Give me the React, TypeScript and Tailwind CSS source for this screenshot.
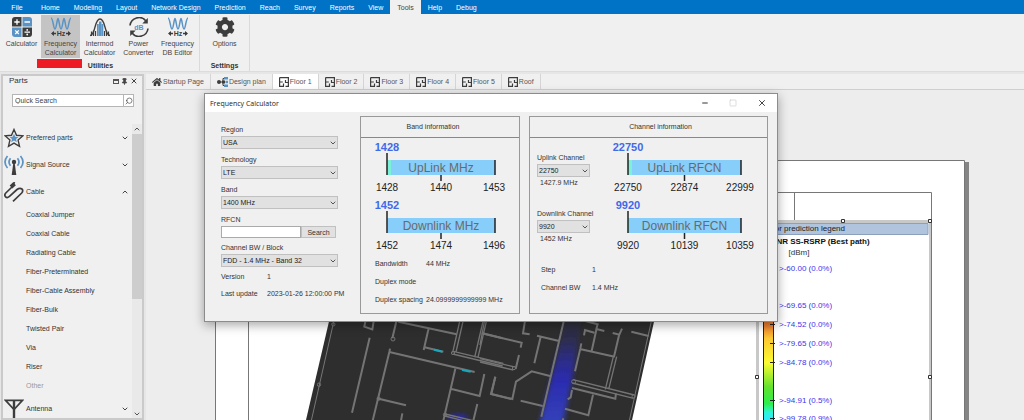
import type { ReactNode } from "react";
import { ChevronDown, ChevronUp, Minus, Pin, Search, Square, X } from "lucide-react";
import { FaCog, FaHome } from "react-icons/fa";
import { clsx } from "clsx";

const menuItems = [
  "Home", "Modeling", "Layout", "Network Design", "Prediction", "Reach",
  "Survey", "Reports", "View", "Tools", "Help", "Debug",
];

const cableItems = [
  "Coaxial Jumper", "Coaxial Cable", "Radiating Cable", "Fiber-Preterminated",
  "Fiber-Cable Assembly", "Fiber-Bulk", "Twisted Pair", "Via", "Riser", "Other",
];

const legendRows = [
  { y: 268, text: ">-60.00 (0.0%)" },
  { y: 305, text: ">-69.65 (0.0%)" },
  { y: 324, text: ">-74.52 (0.0%)" },
  { y: 343, text: ">-79.65 (0.0%)" },
  { y: 362, text: ">-84.78 (0.0%)" },
  { y: 400, text: ">-94.91 (0.5%)" },
  { y: 418, text: ">-99.78 (0.9%)" },
];

/* ---------- icons ---------- */

function CalculatorIcon() {
  return (
    <svg viewBox="0 0 20 20" className="h-5 w-5">
      <path d="M3 0h6.500v9.500H0V3a3 3 0 0 1 3-3z" fill="#3d3d3d" />
      <path d="M10.500 0H17a3 3 0 0 1 3 3v6.500h-9.500z" fill="#5b93c4" />
      <path d="M0 10.500h9.500V20H3a3 3 0 0 1-3-3z" fill="#5b93c4" />
      <path d="M10.500 10.500H20V17a3 3 0 0 1-3 3h-6.500z" fill="#3d3d3d" />
      <g stroke="#fff" strokeWidth="1.300">
        <path d="M2.300 5h5.400M5 2.300v5.400M12.500 5h5.500M3.200 13.400l3.600 3.600M6.800 13.400l-3.600 3.600M12.500 15.200H18" />
      </g>
      <circle cx="15.200" cy="12.900" r="0.900" fill="#fff" />
      <circle cx="15.200" cy="17.500" r="0.900" fill="#fff" />
    </svg>
  );
}

function WaveIcon() {
  return (
    <svg viewBox="0 0 20 20" className="h-5 w-5">
      <path
        d="M0 1C2 1 2.500 12 4 12S6 1.500 7 1.500s1.500 10.500 3 10.500 2-10.500 3-10.500 1.500 10.500 3 10.500S18 1 20 1"
        fill="none" stroke="#5b93c4" strokeWidth="1.500"
      />
      <path d="M1 16.500h4M15 16.500h4" stroke="#3d3d3d" strokeWidth="1.300" />
      <path d="M0 16.500l3-2.500v5zM20 16.500l-3-2.500v5z" fill="#3d3d3d" />
      <text x="10" y="19" textAnchor="middle" fontSize="7" fontWeight="bold" fill="#3d3d3d">Hz</text>
    </svg>
  );
}

function IntermodIcon() {
  return (
    <svg viewBox="0 0 20 20" className="h-5 w-5">
      <path d="M7 7h1.800v12H7zM9 4.500h2.500V19H9zM11.700 7h1.600v12h-1.600z" fill="#5b93c4" />
      <path d="M1.500 19v-4.500M3.500 19v-5.500M5.500 19v-5M14.500 19v-5M16.500 19v-5.500M18.500 19v-4.500" stroke="#3d3d3d" strokeWidth="1.200" />
      <path d="M0 18.500C6 18 4 2 10 2s4 16 10 16.500" fill="none" stroke="#3d3d3d" strokeWidth="1.400" />
    </svg>
  );
}

function PowerIcon() {
  return (
    <svg viewBox="0 0 20 20" className="h-5 w-5">
      <path d="M1 8.500A9 9 0 0 1 17 4M19 11.500A9 9 0 0 1 3 16" fill="none" stroke="#3d3d3d" strokeWidth="1.600" />
      <path d="M18.800 1v5.500h-5.500zM1.200 19v-5.500h5.500z" fill="#3d3d3d" />
      <text x="10" y="12.500" textAnchor="middle" fontSize="7" fontWeight="bold" fill="#5b93c4">dB</text>
    </svg>
  );
}

function StarIcon() {
  return (
    <svg viewBox="0 0 20 20" className="h-5 w-5">
      <path d="M10 1.500l2.500 5.800 6.300.6-4.700 4.200 1.400 6.200L10 15.100l-5.500 3.200 1.400-6.200L1.200 7.900l6.300-.6z" fill="none" stroke="#3d3d3d" strokeWidth="1.400" />
      <path d="M10 5.700l1.300 3 3.200.3-2.400 2.100.7 3.200-2.800-1.700-2.800 1.700.7-3.200L5.500 9l3.200-.3z" fill="#5b93c4" />
    </svg>
  );
}

function SignalIcon() {
  return (
    <svg viewBox="0 0 20 20" className="h-5 w-5">
      <path d="M3.500 1q-5 6 0 12M6.500 3.200q-3 3.800 0 7.600M16.500 1q5 6 0 12M13.500 3.200q3 3.800 0 7.600" fill="none" stroke="#5b93c4" strokeWidth="1.700" />
      <circle cx="10" cy="7" r="2.200" fill="#3d3d3d" />
      <path d="M9.300 8h1.400l1.600 12H7.700z" fill="#3d3d3d" />
    </svg>
  );
}

function CableIcon() {
  return (
    <svg viewBox="0 0 20 20" className="h-5 w-5" fill="none" stroke="#3d3d3d" strokeWidth="1.700">
      <path d="M8 5L1.800 11c-2.500 3 .8 6 3.400 3.500L13 7.500c4-3 7.500.5 4.700 3.500L9 19.300" />
      <path d="M10.500 0L9.500 2" />
      <path d="M10.500 1.800L7 5" strokeWidth="4" />
    </svg>
  );
}

function AntennaIcon() {
  return (
    <svg viewBox="0 0 20 20" className="h-5 w-5" fill="none" stroke="#3d3d3d" strokeWidth="1.800">
      <path d="M1.500 1.300h17L10 10.500z" />
      <path d="M10 1v19" strokeWidth="2.400" />
    </svg>
  );
}

function FloorIcon() {
  return (
    <svg viewBox="0 0 10 10" className="h-2.5 w-2.5" fill="none" stroke="#3d3d3d" strokeWidth="1.200">
      <path d="M.6.6h8.800v8.800H6.500M5 9.400H.6V.6M.6 5h3.200M6.500 3v2.500h3M4.500 6.500v3" />
    </svg>
  );
}

function DesignIcon() {
  return (
    <svg viewBox="0 0 11 10" className="h-2.5 w-[11px]">
      <path d="M3 5h3M6 1.500v7M6 1.500h2M6 8.500h2" stroke="#3d3d3d" fill="none" />
      <circle cx="2" cy="5" r="2" fill="#3d3d3d" />
      <path d="M5 3.500h3v3H5z" fill="#3d3d3d" />
      <path d="M7 0h4v2.500H7zM8.500 3.700H11v2.500H8.500zM7 7.500h4V10H7z" fill="#5b93c4" />
    </svg>
  );
}

/* ---------- ribbon ---------- */

interface RibbonButtonProps {
  icon: ReactNode;
  lines: string[];
  active?: boolean;
}

function RibbonButton({ icon, lines, active }: RibbonButtonProps) {
  return (
    <button className={clsx("flex h-[43px] w-[39px] flex-col items-center pt-0.5 text-[#444]", active && "bg-[#c4c4c4]")}>
      {icon}
      <span className="mt-0.5 leading-[9px]">
        {lines.map((line) => (
          <span key={line} className="block whitespace-nowrap">{line}</span>
        ))}
      </span>
    </button>
  );
}

function Ribbon() {
  return (
    <div className="flex h-[58px] shrink-0 border-b border-[#dcdcdc] bg-[#f0f0f0] pt-px">
      <div className="relative flex w-[200px] flex-col border-r border-[#dadada] pl-0.5">
        <div className="flex">
          <RibbonButton icon={<CalculatorIcon />} lines={["Calculator"]} />
          <RibbonButton icon={<WaveIcon />} lines={["Frequency", "Calculator"]} active />
          <RibbonButton icon={<IntermodIcon />} lines={["Intermod", "Calculator"]} />
          <RibbonButton icon={<PowerIcon />} lines={["Power", "Converter"]} />
          <RibbonButton icon={<WaveIcon />} lines={["Frequency", "DB Editor"]} />
        </div>
        <div className="mt-1 text-center font-bold leading-2 text-[#333]">Utilities</div>
        <div className="absolute left-[37px] top-11 h-[9px] w-[45px] bg-[#ed1c24]" />
      </div>
      <div className="flex w-[50px] flex-col items-center border-r border-[#dadada]">
        <RibbonButton icon={<FaCog className="h-5 w-5 text-[#3d3d3d]" />} lines={["Options"]} />
        <div className="mt-1 font-bold leading-2 text-[#333]">Settings</div>
      </div>
    </div>
  );
}

/* ---------- parts panel ---------- */

interface CategoryProps {
  icon: ReactNode;
  label: string;
  open?: boolean;
}

function Category({ icon, label, open }: CategoryProps) {
  const Chevron = open ? ChevronUp : ChevronDown;
  return (
    <button className="flex h-[27px] w-full shrink-0 items-center gap-0.5 pl-px pr-[3px] text-left">
      {icon}
      <span className="flex-1">{label}</span>
      <Chevron className="h-2 w-2 text-[#444]" strokeWidth={3} />
    </button>
  );
}

function PartsPanel() {
  return (
    <aside className="mt-0.5 flex w-[143px] shrink-0 flex-col border-2 border-[#cacaca] bg-[#f0f0f0] text-[#333]">
      <div className="flex h-2.5 items-center pl-1.5 pr-1">
        <span className="flex-1 text-[8px] leading-2">Parts</span>
        <span className="flex items-center gap-0.5 text-[#444]">
          <button aria-label="Maximize panel" className="h-[5px] w-1.5 border border-t-2 border-[#555]" />
          <button aria-label="Pin panel"><Pin className="h-[7px] w-[7px] fill-current" strokeWidth={3} /></button>
          <button aria-label="Close panel"><X className="h-2 w-2" strokeWidth={3} /></button>
        </span>
      </div>
      <div className="ml-[9px] mr-2 mt-2 flex h-[13px] shrink-0 border border-[#b5b5b5] bg-white">
        <input aria-label="Quick Search" placeholder="Quick Search" className="min-w-0 flex-1 px-0.5 text-[7px] outline-none placeholder:text-[#444]" />
        <button aria-label="Search parts" className="flex w-2.5 items-center justify-center border-l border-[#b5b5b5] text-[#444]">
          <Search className="h-2 w-2 -scale-x-100" />
        </button>
      </div>
      <div className="mt-[17px] flex min-h-0 flex-1">
        <div className="flex min-w-0 flex-1 flex-col overflow-hidden">
          <Category icon={<StarIcon />} label="Preferred parts" />
          <Category icon={<SignalIcon />} label="Signal Source" />
          <Category icon={<CableIcon />} label="Cable" open />
          <ul>
            {cableItems.map((item) => (
              <li key={item} className={clsx("pl-[23px] leading-[19px]", item === "Other" && "text-[#999]")}>{item}</li>
            ))}
          </ul>
          <Category icon={<AntennaIcon />} label="Antenna" />
        </div>
        <div className="flex w-2.5 flex-col items-center bg-[#e9e9e9] text-[#555]">
          <ChevronUp className="my-px h-2 w-2 shrink-0" strokeWidth={3} />
          <div className="h-[165px] w-full bg-[#cdcdcd]" />
          <ChevronDown className="mt-auto h-2 w-2 shrink-0" strokeWidth={3} />
        </div>
      </div>
    </aside>
  );
}

/* ---------- document tabs ---------- */

function DocTab({ icon, label, active }: { icon: ReactNode; label: string; active?: boolean }) {
  return (
    <button
      className={clsx(
        "flex items-center gap-px border-r border-[#d5d5d5] px-1.5 text-[#555]",
        active && "bg-white"
      )}
    >
      {icon}
      {label}
    </button>
  );
}

function DocTabs() {
  return (
    <div className="flex h-4 shrink-0 border-b border-[#cfcfcf] bg-[#f0f0f0]">
      <DocTab icon={<FaHome className="h-2.5 w-2.5 text-[#3d3d3d]" />} label="Startup Page" />
      <DocTab icon={<DesignIcon />} label="Design plan" />
      <DocTab icon={<FloorIcon />} label="Floor 1" active />
      <DocTab icon={<FloorIcon />} label="Floor 2" />
      <DocTab icon={<FloorIcon />} label="Floor 3" />
      <DocTab icon={<FloorIcon />} label="Floor 4" />
      <DocTab icon={<FloorIcon />} label="Floor 5" />
      <DocTab icon={<FloorIcon />} label="Roof" />
    </div>
  );
}

/* ---------- floor plan drawing ---------- */

function FloorPlan() {
  return (
    <svg viewBox="146 90 878 330" className="h-[330px] w-[878px] shrink-0">
      <defs>
        <linearGradient id="scale" gradientUnits="userSpaceOnUse" x1="0" y1="310" x2="0" y2="420">
          <stop offset="0" stopColor="#e2602c" />
          <stop offset="0.150" stopColor="#ee8430" />
          <stop offset="0.260" stopColor="#fbc833" />
          <stop offset="0.480" stopColor="#fcfc30" />
          <stop offset="0.700" stopColor="#62e22e" />
          <stop offset="0.850" stopColor="#2cf04a" />
          <stop offset="0.930" stopColor="#30f5d8" />
          <stop offset="1" stopColor="#2fe8ff" />
        </linearGradient>
        <linearGradient id="coverage" gradientUnits="userSpaceOnUse" x1="0" y1="318" x2="0" y2="420">
          <stop offset="0" stopColor="#2b2ba8" stopOpacity="0.100" />
          <stop offset="0.200" stopColor="#2b2ba8" stopOpacity="0.250" />
          <stop offset="0.400" stopColor="#2b2ba8" stopOpacity="0.700" />
          <stop offset="0.600" stopColor="#2b2baf" />
          <stop offset="1" stopColor="#3340b8" />
        </linearGradient>
        <filter id="soft" x="-50%" y="-20%" width="200%" height="140%">
          <feGaussianBlur stdDeviation="2.500" />
        </filter>
        <clipPath id="building">
          <path d="M357 210H679L632 420H308z" />
        </clipPath>
      </defs>

      {/* sheet */}
      <path d="M965 162h4v258h-4z" fill="#858585" />
      <path d="M215.500 160.500h749V430h-749z" fill="#fff" stroke="#777" />
      <path d="M248.500 430V192.500h683V430M794.500 192v29" fill="none" stroke="#777" />

      <path d="M355 210H679L632 420H306z" fill="#2e2e2e" />
      <g clipPath="url(#building)">
        <path d="M564 315l18 0-8 55-11 55h-24l13-50 9-38z" fill="url(#coverage)" filter="url(#soft)" />
        <ellipse cx="458" cy="418" rx="10" ry="4" fill="#2b2ba8" filter="url(#soft)" />
        <path d="M359 210L311 422M676 210L629 422" fill="none" stroke="#777" />

        <g transform="translate(200 310) scale(.33333)" fill="none" stroke="#747474" strokeWidth="6">
          <path d="M509 83L456 308M497 30l-4 20 24 8 5-30M590 30l-13 55M570 116l-2 10-50 206M568 126l256 60M595 35l175 38M686 55l-15 65M674 112l56 13M536 266l82 20M607 310l-4 22M766 176l-36 156M752 236l87 22 14-66M886 200l-13 52 60 15M848 70l60 15M832 282l-12 50" />
          <path d="M780 30l-22 98M790 30l-22 96M850 30l-26 112M860 30l-26 112M758 132l150 36M760 124l150 36M735 312l85 20M735 318l70 18" strokeWidth="4" />
          <path d="M702 119l25 6M786 180l26 5" stroke="#16a9bd" />
          <g strokeWidth="3">
            <circle cx="400" cy="43" r="5" />
            <circle cx="357" cy="224" r="5" />
            <circle cx="579" cy="87" r="6" />
            <circle cx="536" cy="266" r="5" />
            <circle cx="759" cy="129" r="5" />
            <circle cx="735" cy="314" r="5" />
          </g>
        </g>

        <g transform="translate(480 310) scale(.33333)" fill="none" stroke="#747474" strokeWidth="6">
          <path d="M5 70l120 28-3 15M117 135l-10 42M135 32l-6 38 20 3M171 77l66 16M182 80l-19 80M252 30L184 320M210 198l-55-14-47 31-11 52-63-15 12-52M122 272l66 16M304 100l-3 16-16 68M303 118l101 22M312 76l3-16 28 8M318 34l35 9-4 14 24 6M350 55l-15 68M398 69l20 5 8-18M418 72l-16 68M454 65l52 13M276 234l130 32 2-16M276 240l-4 22-9 6M255 296l70 20 14-62M250 325l-3 12" />
          <path d="M14 30L0 105M0 146l104 25M0 156l100 24M410 140l-24 98M400 140l-24 98M279 209l184 46M277 219l184 46" strokeWidth="4" />
          <circle cx="281" cy="215" r="6" strokeWidth="3" />
          <circle cx="102" cy="174" r="5" strokeWidth="3" />
          <circle cx="461" cy="259" r="5" strokeWidth="3" />
        </g>
      </g>

      {/* prediction legend */}
      <path d="M757 221h175v209H757z" fill="#fff" />
      <path d="M757 221.500h174M757.500 221v200M930.500 221v200" stroke="#c8c8c8" strokeWidth="3" />
      <path d="M931.500 221v200" stroke="#777" />
      <path d="M759 223.500h169v11H759z" fill="#b0c4de" stroke="#8aa0bd" />
      <path d="M763.500 310h10v120h-10z" fill="url(#scale)" stroke="#222" />
      <g fontSize="8">
        <text x="845" y="231" textAnchor="end" fill="#222">Floor prediction legend</text>
        <text x="823" y="244" textAnchor="middle" fontWeight="bold" fill="#111">NR SS-RSRP (Best path)</text>
        <text x="799" y="255" textAnchor="middle" fill="#333">[dBm]</text>
        {legendRows.map((row) => (
          <g key={row.y}>
            <path d={`M770 ${row.y}.5h5`} stroke="#222" />
            <text x="779" y={row.y + 3} fill="#3a35ee">{row.text}</text>
          </g>
        ))}
      </g>
      <path d="M841.500 219.500h3v3h-3zM928.500 219.500h3v3h-3zM755.500 375.500h3v3h-3zM928.500 375.500h3v3h-3z" fill="#fff" stroke="#333" />
    </svg>
  );
}

/* ---------- frequency calculator dialog ---------- */

function SelectField({ id, label, value }: { id: string; label: string; value: string }) {
  return (
    <div className="flex flex-col">
      <label htmlFor={id} className="h-3 whitespace-nowrap leading-3">{label}</label>
      <div className="relative">
        <select id={id} className="block h-[13px] w-full appearance-none border border-[#c0c0c0] bg-[#e1e1e1] px-px text-[7px] leading-none text-[#222]">
          <option>{value}</option>
        </select>
        <ChevronDown className="pointer-events-none absolute right-px top-[3px] h-2 w-2 text-[#555]" strokeWidth={3} />
      </div>
    </div>
  );
}

interface BandScaleProps {
  title: string;
  value: string;
  ticks: [string, string, string];
  width: number;
  marker?: number;
}

// Bar starts 26px in, so the first label can be centred under its left edge.
function BandScale({ title, value, ticks, width, marker = 1 }: BandScaleProps) {
  const left = 26;
  const right = left + width;
  const mid = left + width / 2;
  return (
    <svg width={width + 50} height="58" className="shrink-0" textAnchor="middle">
      <rect x={left} y="22" width={width} height="15" fill="#87cefa" />
      <rect x={left} y="22" width={marker} height="15" fill="#7df0d8" />
      <path d={`M${left} 15v22M${right} 22v15M${mid} 37v6`} stroke="#222" strokeWidth="1.500" />
      <text x={left} y="13" fontSize="11" fontWeight="bold" fill="#4169e8">{value}</text>
      <text x={mid} y="34" fontSize="12" fill="#6a6a6a">{title}</text>
      <g fontSize="10" fill="#222">
        <text x={left} y="53">{ticks[0]}</text>
        <text x={mid} y="53">{ticks[1]}</text>
        <text x={right - 1} y="53">{ticks[2]}</text>
      </g>
    </svg>
  );
}

function FrequencyDialog() {
  return (
    <section
      role="dialog"
      aria-label="Frequency Calculator"
      className="absolute left-[58px] top-[3px] flex w-[574px] flex-col border border-[#8c8c8c] bg-[#f0f0f0] text-[#333] shadow-[0_3px_10px_rgba(0,0,0,0.35)]"
    >
      <header className="flex h-[18px] items-center bg-white pl-[5px] pr-2.5">
        <h1 className="flex-1 font-['Open_Sans','Noto_Sans',sans-serif] text-[7px] text-[#222]">Frequency Calculator</h1>
        <div className="flex gap-5">
          <button aria-label="Minimize"><Minus className="h-2 w-2 text-[#333]" strokeWidth={3} /></button>
          <button aria-label="Maximize" disabled><Square className="h-2 w-2 text-[#ccc]" /></button>
          <button aria-label="Close"><X className="h-2.5 w-2.5 text-[#222]" /></button>
        </div>
      </header>

      <div className="flex pb-[7px] pr-[9px] pt-1">
        <form className="flex w-[155px] shrink-0 flex-col pl-4 pr-[22px] pt-2">
          <div className="flex flex-col gap-[5px]">
            <SelectField id="region" label="Region" value="USA" />
            <SelectField id="technology" label="Technology" value="LTE" />
            <SelectField id="band" label="Band" value="1400 MHz" />
            <div>
              <label htmlFor="rfcn" className="block h-3 leading-3">RFCN</label>
              <div className="flex h-3 pr-0.5">
                <input id="rfcn" className="min-w-0 flex-1 border border-[#aaa] bg-white px-px text-[7px]" />
                <button type="button" className="w-[35px] border border-[#c0c0c0] bg-[#e1e1e1]">Search</button>
              </div>
            </div>
          </div>
          <div className="mt-1">
            <SelectField id="block" label="Channel BW / Block" value="FDD - 1.4 MHz - Band 32" />
          </div>
          <dl className="mt-1 grid grid-cols-[46px_max-content] gap-y-[5px] leading-3">
            <dt>Version</dt>
            <dd>1</dd>
            <dt>Last update</dt>
            <dd>2023-01-26 12:00:00 PM</dd>
          </dl>
        </form>

        <section className="flex h-[198px] w-40 shrink-0 flex-col border border-[#999]">
          <h2 className="h-[21px] border-b border-[#888] pr-3.5 text-center leading-5">Band information</h2>
          <BandScale title="UpLink MHz" value="1428" ticks={["1428", "1440", "1453"]} width={108} marker={4} />
          <BandScale title="Downlink MHz" value="1452" ticks={["1452", "1474", "1496"]} width={108} />
          <dl className="mt-1 grid grid-cols-[51px_max-content] gap-y-1.5 pl-3.5 leading-3">
            <dt>Bandwidth</dt>
            <dd>44 MHz</dd>
            <dt>Duplex mode</dt>
            <dd />
            <dt className="whitespace-nowrap">Duplex spacing</dt>
            <dd>24.0999999999999 MHz</dd>
          </dl>
        </section>

        <section className="ml-[9px] flex h-[198px] min-w-0 flex-1 flex-col border border-[#999]">
          <h2 className="h-[21px] border-b border-[#888] pl-6 text-center leading-5">Channel information</h2>
          <div className="flex">
            <div className="flex w-[72px] shrink-0 flex-col pl-[7px] pr-3 pt-3.5">
              <SelectField id="uplink" label="Uplink Channel" value="22750" />
              <span className="pl-[3px] leading-3">1427.9 MHz</span>
            </div>
            <BandScale title="UpLink RFCN" value="22750" ticks={["22750", "22874", "22999"]} width={113} marker={4} />
          </div>
          <div className="flex">
            <div className="flex w-[72px] shrink-0 flex-col pl-[7px] pr-3 pt-3">
              <SelectField id="downlink" label="Downlink Channel" value="9920" />
              <span className="pl-[3px] leading-3">1452 MHz</span>
            </div>
            <BandScale title="Downlink RFCN" value="9920" ticks={["9920", "10139", "10359"]} width={113} />
          </div>
          <dl className="mt-2.5 grid grid-cols-[51px_max-content] gap-y-1.5 pl-[11px] leading-3">
            <dt>Step</dt>
            <dd>1</dd>
            <dt>Channel BW</dt>
            <dd>1.4 MHz</dd>
          </dl>
        </section>
      </div>
    </section>
  );
}

export default function App() {
  return (
    <div className="flex h-screen flex-col overflow-hidden bg-[#f0f0f0] font-['Liberation_Sans',Arial,sans-serif] text-[7px] leading-none">
      <nav className="flex h-3.5 shrink-0 bg-[#0173c7] text-white">
        <button className="w-[34px]">File</button>
        {menuItems.map((item) => (
          <button key={item} className={clsx("px-[7px]", item === "Tools" && "bg-[#f0f0f0] text-[#444]")}>{item}</button>
        ))}
      </nav>
      <Ribbon />
      <div className="flex min-h-0 flex-1 gap-0.5 bg-[#e6e6e6] pl-px">
        <PartsPanel />
        <main className="mt-0.5 flex min-w-0 flex-1 flex-col">
          <DocTabs />
          <div className="relative min-h-0 flex-1">
            <div className="h-full overflow-hidden bg-[#ededed]">
              <FloorPlan />
            </div>
            <FrequencyDialog />
          </div>
        </main>
      </div>
    </div>
  );
}
